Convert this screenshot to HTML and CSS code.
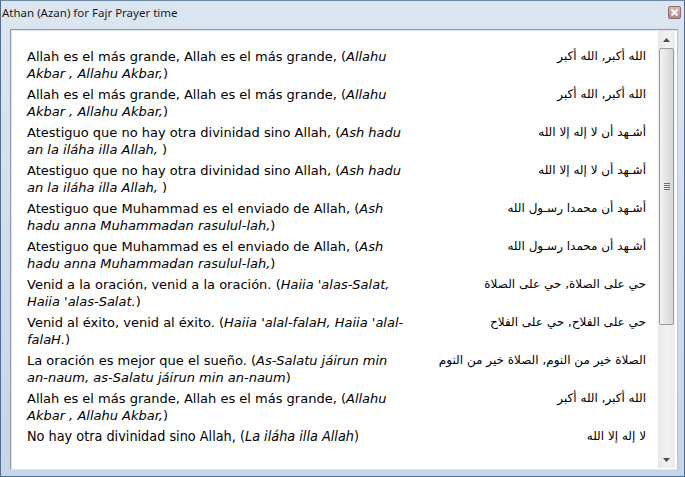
FILE: index.html
```html
<!DOCTYPE html>
<html>
<head>
<meta charset="utf-8">
<link rel="stylesheet" href="styles.css">
</head>
<body>
<div class="window">
  <div class="titlebar">
    <span class="title">Athan (Azan) for Fajr Prayer time</span>
    <span class="close"><svg width="9" height="9" viewBox="0 0 9 9"><path d="M1.5 1.5 L7.5 7.5 M7.5 1.5 L1.5 7.5" stroke="#fff" stroke-width="1.8"/></svg></span>
  </div>
  <div class="panel">
    <div class="list">
      <div class="row"><div class="es">Allah es el más grande, Allah es el más grande, (<i>Allahu Akbar , Allahu Akbar,</i>)</div><div class="ar" dir="rtl">الله أكبر, الله أكبر</div></div>
      <div class="row"><div class="es">Allah es el más grande, Allah es el más grande, (<i>Allahu Akbar , Allahu Akbar,</i>)</div><div class="ar" dir="rtl">الله أكبر, الله أكبر</div></div>
      <div class="row"><div class="es">Atestiguo que no hay otra divinidad sino Allah, (<i>Ash hadu an la iláha illa Allah, </i>)</div><div class="ar" dir="rtl">أشـهد أن لا إله إلا الله</div></div>
      <div class="row"><div class="es">Atestiguo que no hay otra divinidad sino Allah, (<i>Ash hadu an la iláha illa Allah, </i>)</div><div class="ar" dir="rtl">أشـهد أن لا إله إلا الله</div></div>
      <div class="row"><div class="es">Atestiguo que Muhammad es el enviado de Allah, (<i>Ash hadu anna Muhammadan rasulul-lah,</i>)</div><div class="ar" dir="rtl">أشـهد أن محمدا رسـول الله</div></div>
      <div class="row"><div class="es">Atestiguo que Muhammad es el enviado de Allah, (<i>Ash hadu anna Muhammadan rasulul-lah,</i>)</div><div class="ar" dir="rtl">أشـهد أن محمدا رسـول الله</div></div>
      <div class="row"><div class="es">Venid a la oración, venid a la oración. (<i>Haiia 'alas-Salat, Haiia 'alas-Salat.</i>)</div><div class="ar" dir="rtl">حي على الصلاة, حي على الصلاة</div></div>
      <div class="row"><div class="es">Venid al éxito, venid al éxito. (<i>Haiia 'alal-falaH, Haiia 'alal-falaH.</i>)</div><div class="ar" dir="rtl">حي على الفلاح, حي على الفلاح</div></div>
      <div class="row"><div class="es">La oración es mejor que el sueño. (<i>As-Salatu jáirun min an-naum, as-Salatu jáirun min an-naum</i>)</div><div class="ar" dir="rtl">الصلاة خير من النوم, الصلاة خير من النوم</div></div>
      <div class="row"><div class="es">Allah es el más grande, Allah es el más grande, (<i>Allahu Akbar , Allahu Akbar,</i>)</div><div class="ar" dir="rtl">الله أكبر, الله أكبر</div></div>
      <div class="row"><div class="es alt">No hay otra divinidad sino Allah, (<i>La iláha illa Allah</i>)</div><div class="ar" dir="rtl">لا إله إلا الله</div></div>
    </div>
    <div class="scrollbar">
      <div class="arrow up"><svg width="7" height="4" viewBox="0 0 7 4"><path d="M0 4 L3.5 0 L7 4 Z" fill="#4d4d4d"/></svg></div>
      <div class="track">
        <div class="thumb"><span class="grip"></span></div>
      </div>
      <div class="arrow down"><svg width="7" height="4" viewBox="0 0 7 4"><path d="M0 0 L3.5 4 L7 0 Z" fill="#4d4d4d"/></svg></div>
    </div>
  </div>
</div>
</body>
</html>
```

FILE: styles.css
```css
html, body {
  margin: 0;
  padding: 0;
}
body {
  width: 685px;
  height: 477px;
  overflow: hidden;
}
.window {
  box-sizing: border-box;
  width: 685px;
  height: 477px;
  background: linear-gradient(#dbe6f1, #cfdceb 60%, #c5d5e7);
  border: 1px solid #4f6d8c;
  border-top-color: #6d89a6;
  display: flex;
  flex-direction: column;
}
.titlebar {
  height: 27px;
  display: flex;
  align-items: flex-start;
  justify-content: space-between;
  padding: 0 2px 0 1px;
}
.title {
  font-family: "Noto Sans", "Open Sans", sans-serif;
  font-size: 11.5px;
  color: #1c1c1c;
  margin-top: 4px;
}
.close {
  box-sizing: border-box;
  width: 13px;
  height: 13px;
  margin-top: 5px;
  margin-right: 1px;
  border: 1px solid #8c6c6c;
  border-radius: 2px;
  background: linear-gradient(#d9b7b7, #b98585);
  display: flex;
  align-items: center;
  justify-content: center;
}
.close svg { display: block; }
.panel {
  box-sizing: border-box;
  margin: 1px 6px 0 9px;
  height: 441px;
  border: 1px solid #8d9aaa;
  border-right-color: #b8c4d2;
  border-bottom-color: #dfe7f0;
  background: #fff;
  display: flex;
  box-shadow: inset 1px 1px 0 #e2e6ea;
}
.list {
  flex: 1;
  padding: 16px 12px 0 16px;
  display: flex;
  flex-direction: column;
}
.row {
  display: grid;
  grid-template-columns: 380px 1fr;
  padding: 2px 0;
  line-height: 17px;
}
.es {
  font-family: "DejaVu Sans", Verdana, sans-serif;
  font-size: 13px;
  color: #000;
}
.es.alt {
  font-family: "DejaVu Sans Condensed", "Liberation Sans", sans-serif;
  font-size: 14.3px;
}
.ar {
  font-family: "DejaVu Sans", sans-serif;
  font-size: 12px;
  color: #000;
  text-align: right;
}
.scrollbar {
  width: 17px;
  margin: 1px 2px 1px 0;
  background: linear-gradient(90deg, #e8e8e8, #f2f2f2 50%, #ececec);
  display: flex;
  flex-direction: column;
}
.arrow {
  height: 17px;
  display: flex;
  align-items: center;
  justify-content: center;
}
.arrow svg { display: block; }
.track {
  flex: 1;
  position: relative;
}
.thumb {
  box-sizing: border-box;
  margin: 0 1px;
  height: 277px;
  border: 1px solid #9b9b9b;
  border-radius: 2px;
  background: linear-gradient(90deg, #f4f4f4, #e4e4e4 50%, #d6d6d6);
  display: flex;
  align-items: center;
  justify-content: center;
}
.grip {
  width: 6px;
  height: 7px;
  background: repeating-linear-gradient(#6e6e6e 0 1px, transparent 1px 2px);
}
```
